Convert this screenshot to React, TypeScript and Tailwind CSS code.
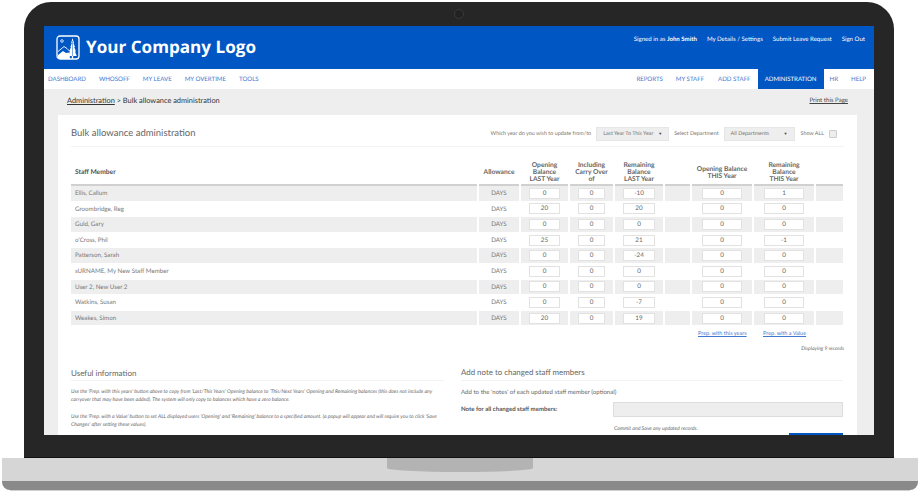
import React from "react";

const rows: [string, string, string, string, string, string][] = [
  ["Ellis, Callum", "0", "0", "-10", "0", "1"],
  ["Groombridge, Reg", "20", "0", "20", "0", "0"],
  ["Guld, Gary", "0", "0", "0", "0", "0"],
  ["o'Cross, Phil", "25", "0", "21", "0", "-1"],
  ["Patterson, Sarah", "0", "0", "-24", "0", "0"],
  ["sURNAME, My New Staff Member", "0", "0", "0", "0", "0"],
  ["User 2, New User 2", "0", "0", "0", "0", "0"],
  ["Watkins, Susan", "0", "0", "-7", "0", "0"],
  ["Weakes, Simon", "20", "0", "19", "0", "0"],
];

const grid = "grid grid-cols-[406px_40px_47px_43px_48px_25px_60px_60px_27px] gap-x-[2px]";

function Logo() {
  return (
    <svg width="24" height="25" viewBox="0 0 24 25" className="shrink-0">
      <rect x="1" y="1" width="22" height="23" rx="3" fill="#0056c3" stroke="#fff" strokeWidth="1.3" />
      <circle cx="6" cy="6" r="1.3" fill="none" stroke="#fff" strokeWidth="0.8" />
      <path d="M2 16.5 L8 11.5 L11 13.5 L13.5 16" fill="none" stroke="#fff" strokeWidth="0.9" />
      <path d="M2 20 L7 16 L10 18 L13.5 17.5 L14 24 L3 24 Q2 24 2 22.5 Z" fill="#fff" />
      <path d="M16.5 3 L18 8 L17.4 8 L19 12 L18.2 12 L20 16.5 L19 16.5 L20.8 21 L17.2 21 L17.2 24 L15.8 24 L15.8 21 L12.4 21 L14 16.5 L13.2 16.5 L15 12 L14.4 12 L15.8 8 L15.2 8 Z" fill="#fff" />
      <path d="M16.5 6 V21" stroke="#0056c3" strokeWidth="0.5" />
    </svg>
  );
}

function Cell({ v }: { v: string }) {
  return (
    <div className="w-full h-[11px] bg-white border border-[#e2e2e2] text-center text-[6.3px] leading-[9px] text-[#666]">{v}</div>
  );
}

export default function App() {
  return (
    <div className="w-[919px] h-[493px] bg-white overflow-hidden flex flex-col items-start pt-[2px] font-['Lato',sans-serif] [text-rendering:geometricPrecision]">
      <div className="ml-[24px] w-[870px] h-[456px] shrink-0 rounded-t-[27px] bg-[#262626] pl-[20px] flex flex-col border-b border-[#111]">
        <div className="h-[24px] shrink-0 flex items-center justify-center pr-[20px]">
          <div className="w-[10px] h-[10px] rounded-full border border-[#3a3a3a] bg-[#222]" />
        </div>
        <div className="w-[830px] h-[409px] shrink-0 bg-[#eeeeee] overflow-hidden flex flex-col">
          <div className="h-[42.5px] shrink-0 bg-[#0056c3] flex justify-between pl-[12px] pr-[9px]">
            <div className="flex items-center gap-[6px]">
              <Logo />
              <span className="text-[17.1px] font-bold text-white font-['Open_Sans',sans-serif] leading-none pt-[1px]">Your Company Logo</span>
            </div>
            <div className="flex items-start pt-[9px] text-[6.1px] leading-[9px] text-white">
              <span>Signed in as <b>John Smith</b></span>
              <span className="ml-[10px]">My Details / Settings</span>
              <span className="ml-[10px]">Submit Leave Request</span>
              <span className="ml-[10px]">Sign Out</span>
            </div>
          </div>
          <div className="h-[20px] shrink-0 bg-white flex justify-between items-stretch text-[6.1px] text-[#3f78cf] pl-[4px]">
            <div className="flex items-center gap-[13px] pt-[2px]">
              <span>DASHBOARD</span>
              <span>WHOSOFF</span>
              <span>MY LEAVE</span>
              <span>MY OVERTIME</span>
              <span>TOOLS</span>
            </div>
            <div className="flex items-stretch pr-[8px]">
              <span className="flex items-center pt-[2px]">REPORTS</span>
              <span className="flex items-center pt-[2px] ml-[13px]">MY STAFF</span>
              <span className="flex items-center pt-[2px] ml-[14px]">ADD STAFF</span>
              <span className="flex items-center pt-[2px] ml-[7px] w-[66px] justify-center bg-[#0056c3] text-white">ADMINISTRATION</span>
              <span className="flex items-center pt-[2px] ml-[6px]">HR</span>
              <span className="flex items-center pt-[2px] ml-[13px]">HELP</span>
            </div>
          </div>
          <div className="h-[26px] shrink-0 flex justify-between items-center pl-[23px] pr-[26px] pb-[2px]">
            <div className="text-[7.4px] text-[#333]">
              <span className="underline">Administration</span> &gt; Bulk allowance administration
            </div>
            <span className="text-[6.1px] text-[#444] underline">Print this Page</span>
          </div>
          <div className="w-[799px] ml-[14px] bg-white px-[13px] flex-1">
            <div className="h-[32px] pt-[8px] border-b border-[#f3f3f3] flex items-center justify-between">
              <span className="text-[9.5px] text-[#666]">Bulk allowance administration</span>
              <div className="flex items-center text-[5.4px] text-[#777] pr-[7px]">
                <span>Which year do you wish to update from/to</span>
                <div className="ml-[5px] w-[73px] h-[14px] bg-[#eee] border border-[#e6e6e6] flex items-center justify-between px-[6px] whitespace-nowrap">
                  <span>Last Year To This Year</span>
                  <span className="text-[4px] text-[#444]">▼</span>
                </div>
                <span className="ml-[5px]">Select Department</span>
                <div className="ml-[5px] w-[71px] h-[14px] bg-[#eee] border border-[#e6e6e6] flex items-center justify-between px-[6px] whitespace-nowrap">
                  <span>All Departments</span>
                  <span className="text-[4px] text-[#444]">▼</span>
                </div>
                <span className="ml-[6px]">Show ALL</span>
                <div className="ml-[5px] w-[8px] h-[8px] bg-[#eee] border border-[#ccc] rounded-[1px]" />
              </div>
            </div>

            <div className={`${grid} mt-[12.5px] pt-[2px] h-[25px] items-center text-center text-[6.7px] leading-[7px] font-bold text-[#666]`}>
              <div className="text-left pl-[4px] text-[#555]">Staff Member</div>
              <div>Allowance</div>
              <div>Opening<br />Balance<br />LAST Year</div>
              <div>Including<br />Carry Over<br />of</div>
              <div>Remaining<br />Balance<br />LAST Year</div>
              <div />
              <div>Opening Balance<br />THIS Year</div>
              <div>Remaining<br />Balance<br />THIS Year</div>
              <div />
            </div>
            <div className={`${grid} h-[2px]`}>
              {Array.from({ length: 9 }).map((_, i) => (
                <div key={i} className="bg-[#d0d0d0]" />
              ))}
            </div>
            {rows.map((r, i) => {
              const bg = i % 2 === 0 ? "bg-[#eeeeee]" : "bg-white";
              return (
                <div key={r[0]} className={`${grid} h-[15.6px] text-[6.2px] text-[#777]`}>
                  <div className={`${bg} h-[14.5px] pl-[4px] pt-[1px] flex items-center`}>{r[0]}</div>
                  <div className={`${bg} h-[14.5px] pt-[1px] flex items-center justify-center`}>DAYS</div>
                  <div className={`${bg} h-[14.5px] flex items-center px-[8px]`}><Cell v={r[1]} /></div>
                  <div className={`${bg} h-[14.5px] flex items-center px-[8px]`}><Cell v={r[2]} /></div>
                  <div className={`${bg} h-[14.5px] flex items-center px-[8px]`}><Cell v={r[3]} /></div>
                  <div className={`${bg} h-[14.5px]`} />
                  <div className={`${bg} h-[14.5px] flex items-center px-[10px]`}><Cell v={r[4]} /></div>
                  <div className={`${bg} h-[14.5px] flex items-center px-[10px]`}><Cell v={r[5]} /></div>
                  <div className={`${bg} h-[14.5px]`} />
                </div>
              );
            })}
            <div className="flex h-[14px] pt-[1px] items-center text-[5.5px] text-[#3f78cf] underline pl-[627px]">
              <span className="w-[65px]">Prep. with this years</span>
              <span>Prep. with a Value</span>
            </div>
            <div className="h-[18px] pt-[1px] flex items-center justify-end text-[5.1px] italic text-[#666]">Displaying 9 records</div>
            <div className="flex gap-[17px] mt-[7px]">
              <div className="w-[373px]">
                <div className="h-[16px] pt-[1px] flex items-center text-[8px] text-[#666] border-b border-[#f3f3f3]">Useful information</div>
                <div className="mt-[6.5px] text-[5.15px] leading-[8.5px] italic text-[#666]">
                  <p>Use the 'Prep. with this years' button above to copy from 'Last/This Years' Opening balance to 'This/Next Years' Opening and Remaining balances (this does not include any carryover that may have been added). The system will only copy to balances which have a zero balance.</p>
                  <p className="mt-[8px]">Use the 'Prep. with a Value' button to set ALL displayed users 'Opening' and 'Remaining' balance to a specified amount. (a popup will appear and will require you to click 'Save Changes' after setting these values).</p>
                </div>
              </div>
              <div className="w-[382px]">
                <div className="h-[16px] pt-[1px] flex items-center text-[7.9px] text-[#666] border-b border-[#f3f3f3]">Add note to changed staff members</div>
                <div className="mt-[6.5px] text-[6.1px] leading-[9px] text-[#666]">Add to the 'notes' of each updated staff member (optional)</div>
                <div className="mt-[5px] flex items-center justify-between">
                  <span className="text-[6.1px] pt-[1px] font-bold text-[#555]">Note for all changed staff members:</span>
                  <div className="w-[230px] h-[15px] bg-[#eee] border border-[#ddd]" />
                </div>
                <div className="mt-[8px] pt-[0.5px] ml-[153px] text-[5.2px] leading-[8px] italic text-[#666]">Commit and Save any updated records.</div>
                <div className="ml-[328px] w-[54px] h-[12px] bg-[#0056c3]" />
              </div>
            </div>
          </div>
        </div>
      </div>
      <div className="ml-[2px] w-[916px] h-[23px] shrink-0 bg-[#d6d6d6] flex justify-center">
        <div className="w-[146px] h-[14px] bg-[#b3b3b3] rounded-b-[73px_4px]" />
      </div>
      <div className="ml-[2px] w-[916px] h-[9px] shrink-0 bg-[#8a8a8a] rounded-b-[8px]" />
      <div className="ml-[10px] w-[900px] h-[1px] shrink-0 bg-[#cfcfcf]" />
    </div>
  );
}
